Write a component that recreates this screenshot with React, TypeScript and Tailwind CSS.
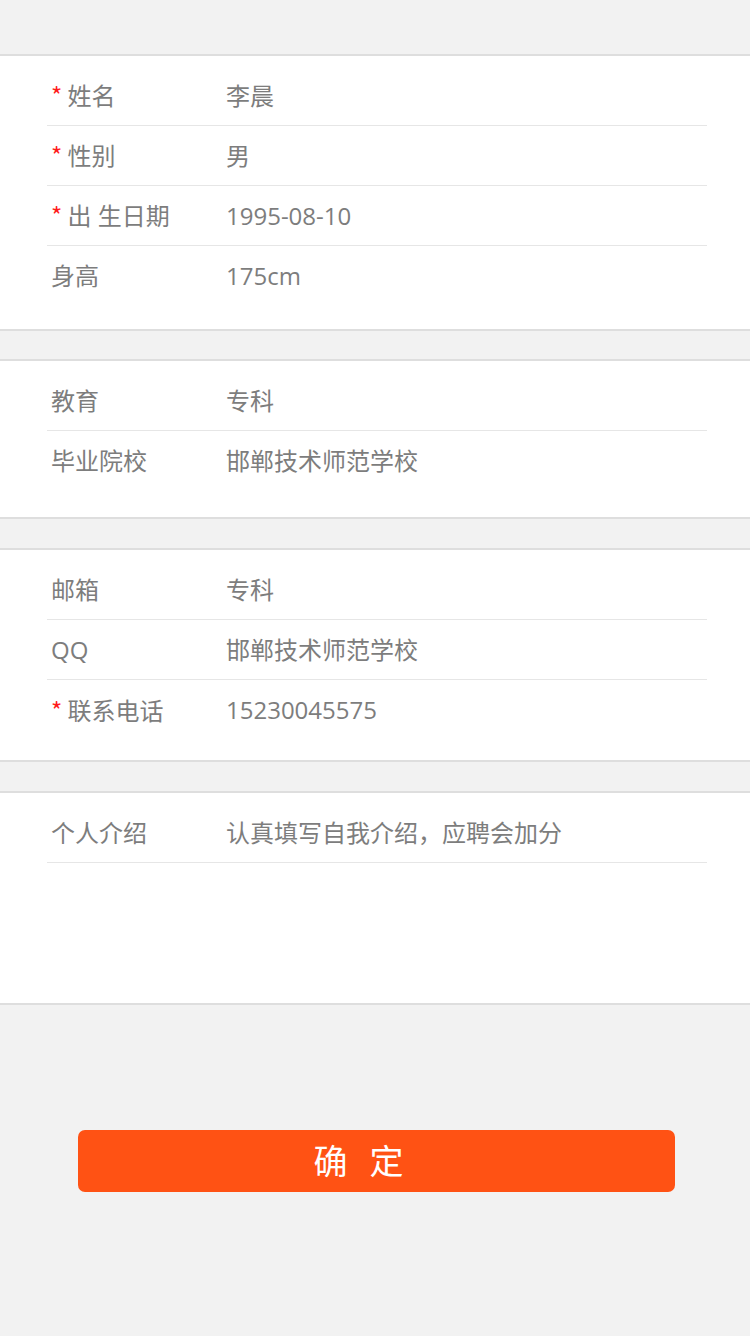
import React from "react";

type Row = { label: string; value: string; required?: boolean };

const font = { fontFamily: '"Open Sans", "Noto Sans CJK SC", sans-serif' };

function Section({ rows, pb, extra }: { rows: Row[]; pb: string; extra?: boolean }) {
  return (
    <div className={`bg-white border-y-2 border-[#dedede] pt-[10px] ${pb}`}>
      {rows.map((r, i) => (
        <div
          key={i}
          className={`ml-[47px] mr-[43px] h-[60px] flex items-center ${
            i < rows.length - 1 || extra ? "border-b border-[#e6e6e6]" : ""
          }`}
        >
          <div className="w-[179px] pl-[4px] text-[24px] leading-[32px] text-[#7d7d7d] whitespace-pre">
            {r.required && (
              <span className="text-[#ff1a1a] font-['Noto_Sans_CJK_SC',sans-serif]">* </span>
            )}
            {r.label}
          </div>
          <div className="text-[24px] leading-[32px] text-[#7d7d7d]">{r.value}</div>
        </div>
      ))}
    </div>
  );
}

export default function App() {
  return (
    <div className="w-[750px] min-h-[1336px] bg-[#f2f2f2]" style={font}>
      <div className="h-[54px]" />
      <Section
        pb="pb-[23px]"
        rows={[
          { label: "姓名", value: "李晨", required: true },
          { label: "性别", value: "男", required: true },
          { label: "出 生日期", value: "1995-08-10", required: true },
          { label: "身高", value: "175cm" },
        ]}
      />
      <div className="h-[28px]" />
      <Section
        pb="pb-[26px]"
        rows={[
          { label: "教育", value: "专科" },
          { label: "毕业院校", value: "邯郸技术师范学校" },
        ]}
      />
      <div className="h-[29px]" />
      <Section
        pb="pb-[20px]"
        rows={[
          { label: "邮箱", value: "专科" },
          { label: "QQ", value: "邯郸技术师范学校" },
          { label: "联系电话", value: "15230045575", required: true },
        ]}
      />
      <div className="h-[29px]" />
      <Section
        pb="pb-[140px]"
        extra
        rows={[{ label: "个人介绍", value: "认真填写自我介绍，应聘会加分" }]}
      />
      <div className="h-[125px]" />
      <div className="px-[78px]">
        <button className="w-[597px] h-[62px] rounded-[7px] bg-[#ff5214] text-white text-[34px] tracking-[22px] pr-[14px] flex items-center justify-center">
          确定
        </button>
      </div>
    </div>
  );
}
